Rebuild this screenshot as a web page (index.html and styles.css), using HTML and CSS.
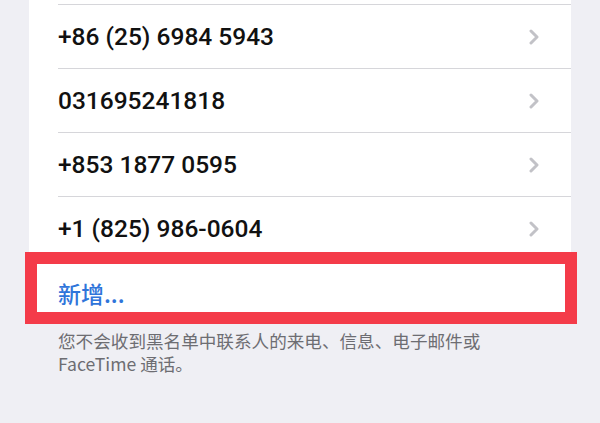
FILE: index.html
```html
<!DOCTYPE html>
<html lang="zh-CN">
<head>
<meta charset="utf-8">
<link rel="stylesheet" href="styles.css">
</head>
<body>
<div class="page">
  <div class="card">
    <div class="row">
      <span class="num">+86 (25) 6984 5943</span>
      <svg class="chev" viewBox="0 0 10 16" width="10" height="16"><path d="M2 2 L8 8 L2 14" fill="none" stroke="#c2c2c7" stroke-width="3" stroke-linecap="round" stroke-linejoin="round"/></svg>
    </div>
    <div class="row">
      <span class="num">031695241818</span>
      <svg class="chev" viewBox="0 0 10 16" width="10" height="16"><path d="M2 2 L8 8 L2 14" fill="none" stroke="#c2c2c7" stroke-width="3" stroke-linecap="round" stroke-linejoin="round"/></svg>
    </div>
    <div class="row">
      <span class="num">+853 1877 0595</span>
      <svg class="chev" viewBox="0 0 10 16" width="10" height="16"><path d="M2 2 L8 8 L2 14" fill="none" stroke="#c2c2c7" stroke-width="3" stroke-linecap="round" stroke-linejoin="round"/></svg>
    </div>
    <div class="row">
      <span class="num">+1 (825) 986-0604</span>
      <svg class="chev" viewBox="0 0 10 16" width="10" height="16"><path d="M2 2 L8 8 L2 14" fill="none" stroke="#c2c2c7" stroke-width="3" stroke-linecap="round" stroke-linejoin="round"/></svg>
    </div>
    <div class="row add-row">
      <span class="add">新增...</span>
      <div class="highlight"></div>
    </div>
  </div>
  <p class="footer">您不会收到黑名单中联系人的来电、信息、电子邮件或 FaceTime 通话。</p>
</div>
</body>
</html>
```

FILE: styles.css
```css
html, body {
  margin: 0;
  padding: 0;
  background: #efeff4;
}
.page {
  width: 600px;
  height: 423px;
  overflow: hidden;
  background: #efeff4;
}
.card {
  margin-left: 29px;
  width: 542px;
  background: #ffffff;
  padding-top: 4px;
}
.row {
  position: relative;
  height: 63px;
  border-top: 1px solid #d6d6da;
  margin-left: 29px;
  padding-right: 32px;
  display: flex;
  align-items: center;
  justify-content: space-between;
}
.num {
  font-family: Roboto, "Liberation Sans", sans-serif;
  font-weight: 500;
  font-size: 24.5px;
  color: #111111;
}
.chev {
  display: block;
}
.add-row {
  border-top-color: transparent;
}
.add {
  font-family: "Noto Sans CJK SC", "Noto Sans", sans-serif;
  font-weight: 500;
  font-size: 23px;
  color: #2f75da;
  margin-top: 1px;
}
.highlight {
  position: absolute;
  left: -33px;
  top: -9px;
  right: -6px;
  bottom: 0;
  border: 12px solid #f43b49;
  pointer-events: none;
}
.footer {
  margin: 5px 0 0 58px;
  width: 450px;
  font-family: "Noto Sans CJK SC", "Noto Sans", sans-serif;
  font-size: 17.6px;
  line-height: 23px;
  color: #6d6d72;
}
```
